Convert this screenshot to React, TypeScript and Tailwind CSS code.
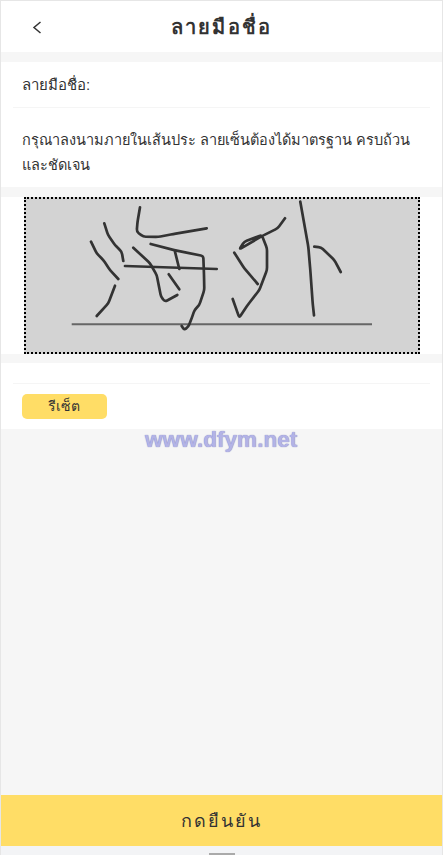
const strokes: number[][][] = [
  [[104.3, 223.3], [108, 235], [115, 245], [121.7, 251.7], [123.3, 261]],
  [[91, 241.7], [96.7, 253.3], [103.3, 260], [110, 270], [118.3, 279]],
  [[115, 285.7], [108.3, 303.3], [96.7, 316]],
  [[140, 207.3], [137.5, 222], [136.7, 231.7], [143.3, 236.7], [158, 237], [173.3, 234], [206.7, 228.3]],
  [[125, 266], [216.7, 269]],
  [[150.7, 244], [176.7, 250.7], [203.3, 256], [204, 275], [204.3, 290], [199.3, 305], [194.5, 310], [191.7, 318.3], [188.3, 326.7], [184.3, 330], [181.7, 326]],
  [[133.3, 247.7], [150, 263.3], [156.7, 275], [161, 296.7], [165, 301.7], [177.3, 295]],
  [[175, 251.7], [179.3, 269]],
  [[168.7, 274.3], [179.3, 289.3]],
  [[285, 218.3], [277.7, 228.3], [262.7, 235.7], [239.3, 249.3], [244.3, 241.7], [261.7, 235], [267, 248.3], [267, 270], [259.3, 290], [247.7, 305], [239.3, 317.7], [232.7, 299]],
  [[234.3, 252.7], [244.3, 268.3], [257.7, 284]],
  [[300.3, 201.7], [308.3, 246.7], [310.3, 270], [312.7, 303.3], [314, 315.3]],
  [[314.3, 246.7], [321, 247.3], [334.3, 260], [340.7, 272]],
];

// soften each corner a little, keep the hand-drawn angles
const toward = (a: number[], b: number[]) => {
  const dist = Math.hypot(b[0] - a[0], b[1] - a[1]);
  const t = Math.min(2.5, dist / 2) / dist;
  return `${a[0] + (b[0] - a[0]) * t} ${a[1] + (b[1] - a[1]) * t}`;
};

const toPath = (pts: number[][]) => {
  let d = `M${pts[0][0]} ${pts[0][1]}`;
  for (let i = 1; i < pts.length - 1; i++) {
    d += ` L${toward(pts[i], pts[i - 1])} Q${pts[i][0]} ${pts[i][1]} ${toward(pts[i], pts[i + 1])}`;
  }
  const last = pts[pts.length - 1];
  return `${d} L${last[0]} ${last[1]}`;
};

export default function App() {
  return (
    <div className="relative flex h-[855px] w-[443px] flex-col overflow-hidden border-x border-t border-[#e6e6e6] bg-[#f6f6f6] font-['Liberation_Sans','Noto_Sans',sans-serif] text-[#333]">
      <header className="relative flex h-[51px] items-center justify-center bg-white">
        <svg className="absolute left-[31px] top-[20px]" width="10" height="13" viewBox="0 0 10 13" fill="none">
          <path d="M8.5 1 L2 6.5 L8.5 12" stroke="#333" strokeWidth="1.5" />
        </svg>
        <h1 className="text-[20px] font-bold tracking-[2.2px]">ลายมือชื่อ</h1>
      </header>

      <section className="mt-[10px] bg-white px-[12px]">
        <div className="flex h-[46px] items-center border-b border-[#f5f5f5] px-[9px] pt-[1px] text-[15px]">ลายมือชื่อ:</div>
        <p className="px-[9px] pb-[9px] pt-[20px] text-[14.5px] leading-[25px]">
          กรุณาลงนามภายในเส้นประ ลายเซ็นต้องได้มาตรฐาน ครบถ้วน และชัดเจน
        </p>
      </section>

      <section className="mt-[10px] bg-white pl-[23px] pr-[22px]">
        <div className="h-[157px] border-2 border-dotted border-black bg-[#d3d3d3]">
          <svg viewBox="26 199 392 153" className="block h-full w-full" fill="none">
            <path d="M71.7 324.3 H372" stroke="#666" strokeWidth="2" />
            {strokes.map((pts) => (
              <path key={pts.join()} d={toPath(pts)} stroke="#333" strokeWidth="2.7" strokeLinecap="round" strokeLinejoin="round" />
            ))}
          </svg>
        </div>
      </section>

      <section className="mt-[9px] bg-white px-[12px] pb-[10px]">
        <div className="h-[21px] border-b border-[#f5f5f5]" />
        <button className="ml-[9px] mt-[10px] flex h-[25px] w-[85px] items-center justify-center rounded-[5px] bg-[#ffdd66] pr-[2px] text-[14px] text-[#333]">
          รีเซ็ต
        </button>
      </section>

      <div className="flex-1" />

      <button className="flex h-[51px] items-center justify-center bg-[#ffdd66] pt-[2px] text-[18px] tracking-[2px] text-[#333]">
        กดยืนยัน
      </button>
      <div className="flex h-[9px] items-end justify-center bg-[#f3f4f6]">
        <div className="h-[2px] w-[26px] bg-[#aaa]" />
      </div>

      <div className="absolute left-[144px] top-[426px] text-[22.6px] font-bold leading-[26px] text-[#b3b3e6] [text-shadow:0_0_1px_#6f6fb5]">
        www.dfym.net
      </div>
    </div>
  );
}
